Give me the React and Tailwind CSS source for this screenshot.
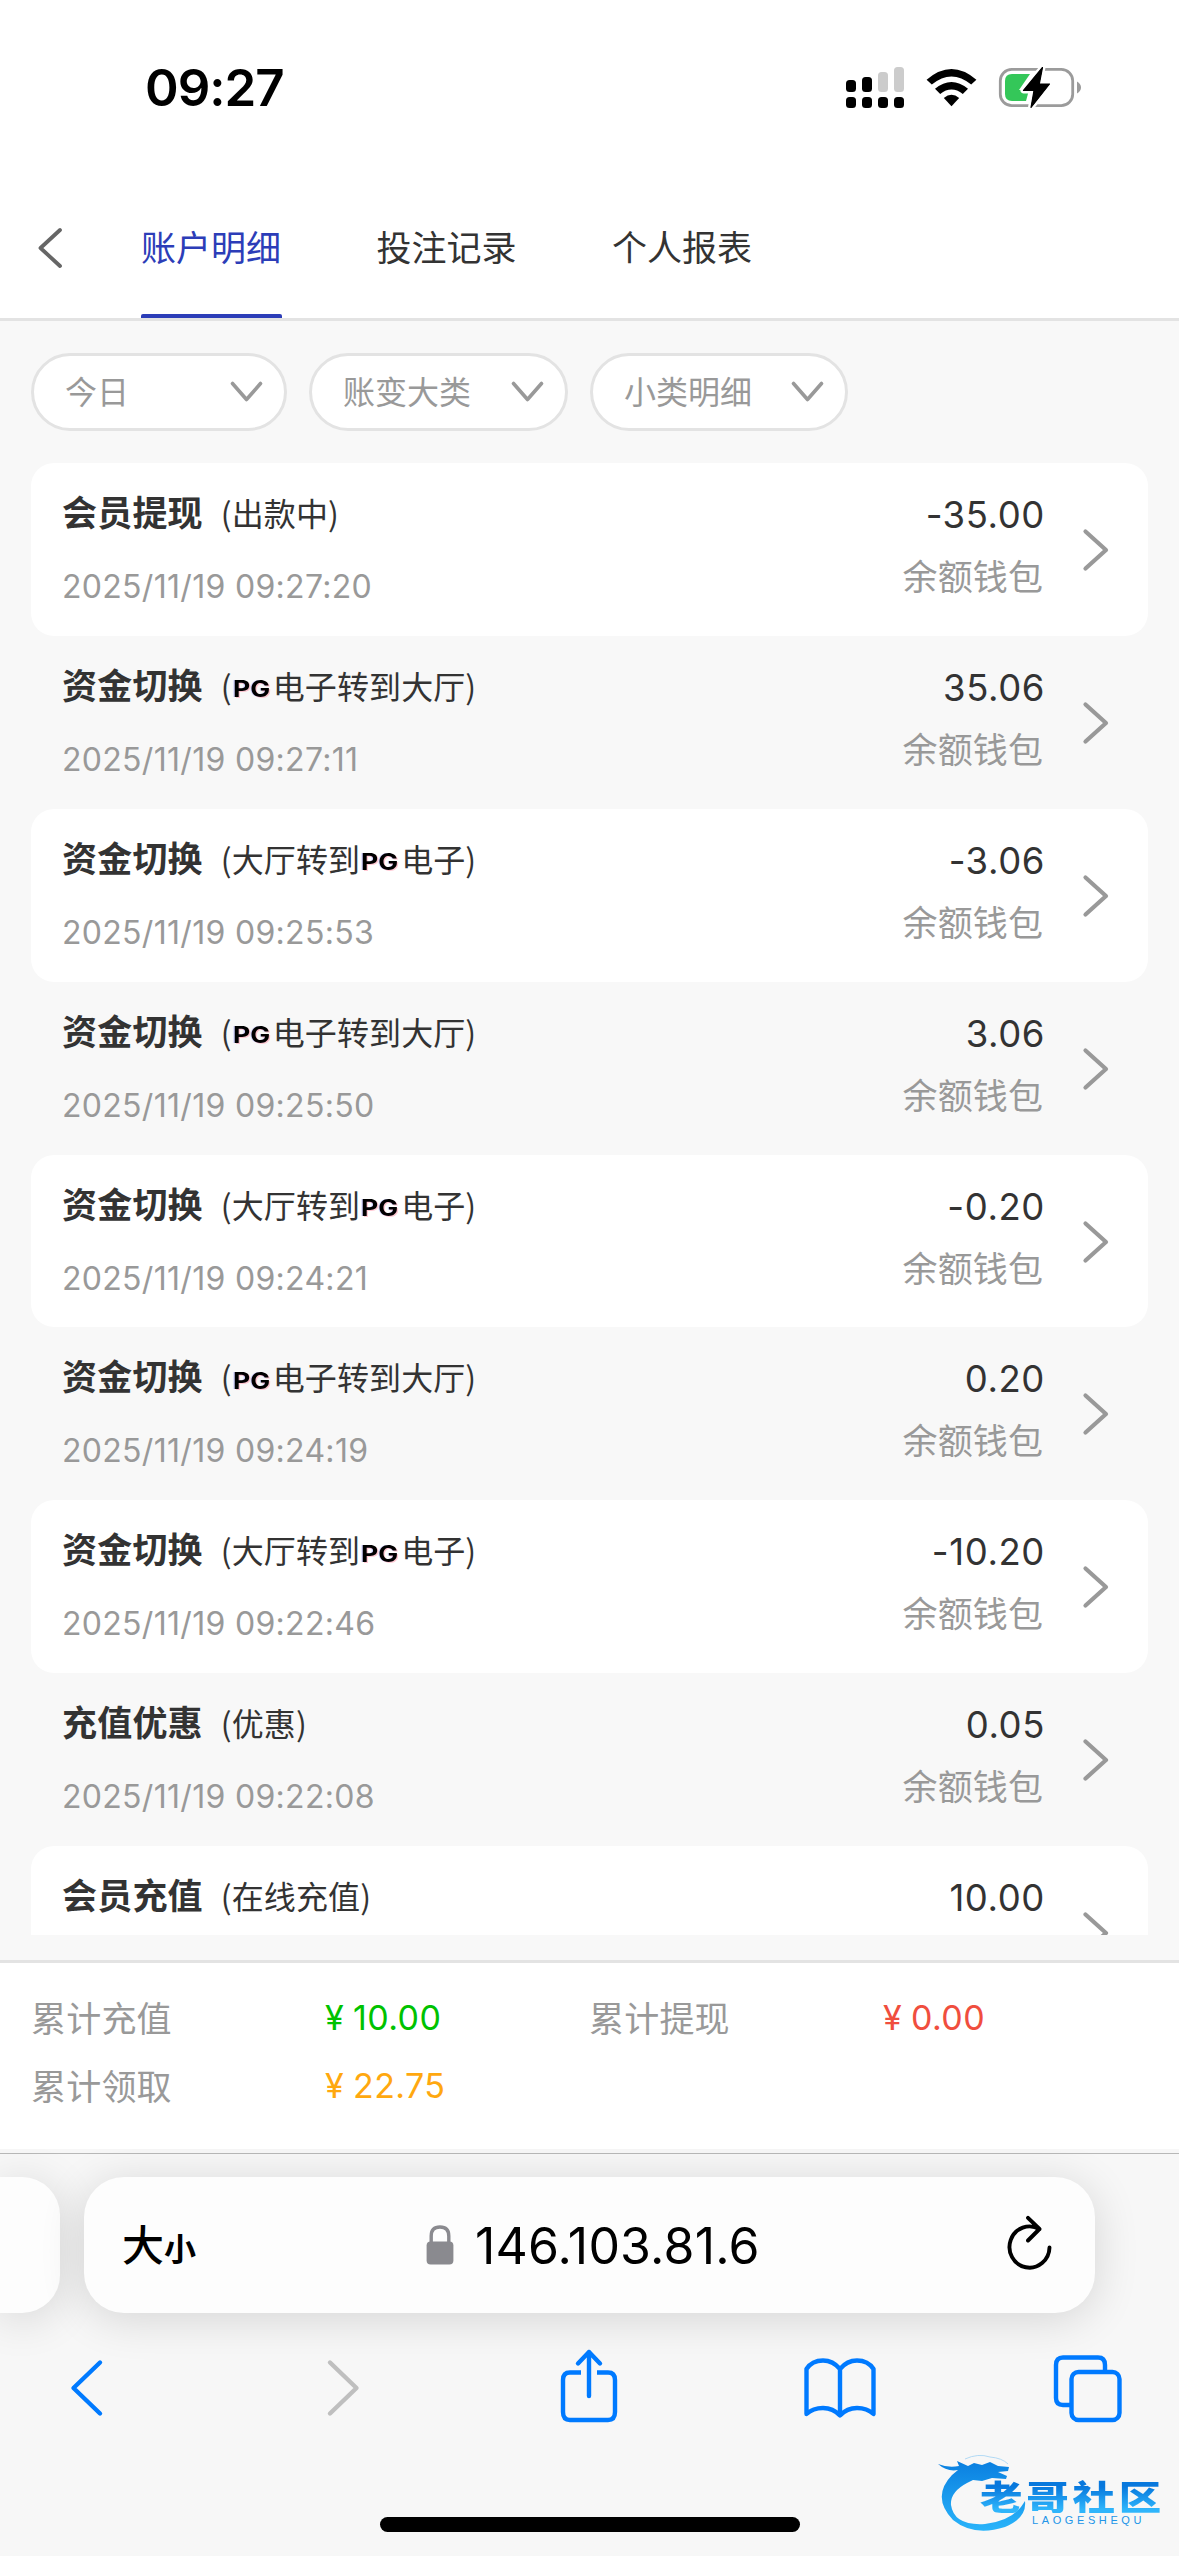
import React from "react";

const CJK = "font-['Noto_Sans_CJK_SC',sans-serif]";
const LATIN = "font-['Inter','Noto_Sans_CJK_SC',sans-serif]";

const PG = () => (
  <span className="-mt-[3px] w-[41px] shrink-0 pl-[1px] text-left">
    <span className="inline-block origin-left scale-x-[1.18] font-['Inter',sans-serif] text-[22.5px] font-bold leading-[32px] text-black [text-shadow:1px_1px_0_#ff5a7a55,-1px_0_0_#5a5aff44]">PG</span>
  </span>
);

const records = [
  { title: "会员提现", note: ["出款中"], time: "2025/11/19 09:27:20", amount: "-35.00" },
  { title: "资金切换", note: ["", "电子转到大厅"], time: "2025/11/19 09:27:11", amount: "35.06" },
  { title: "资金切换", note: ["大厅转到", "电子"], time: "2025/11/19 09:25:53", amount: "-3.06" },
  { title: "资金切换", note: ["", "电子转到大厅"], time: "2025/11/19 09:25:50", amount: "3.06" },
  { title: "资金切换", note: ["大厅转到", "电子"], time: "2025/11/19 09:24:21", amount: "-0.20" },
  { title: "资金切换", note: ["", "电子转到大厅"], time: "2025/11/19 09:24:19", amount: "0.20" },
  { title: "资金切换", note: ["大厅转到", "电子"], time: "2025/11/19 09:22:46", amount: "-10.20" },
  { title: "充值优惠", note: ["优惠"], time: "2025/11/19 09:22:08", amount: "0.05" },
  { title: "会员充值", note: ["在线充值"], time: "", amount: "10.00" },
];

function StatusBar() {
  return (
    <div className="flex h-[176px] items-start justify-between pl-[145px] pr-[97px] pt-[63px]">
      <div className="font-['Inter',sans-serif] text-[51px] font-semibold leading-[50px] tracking-[-1px] text-black">09:27</div>
      <svg width="236" height="42" viewBox="846 67 236 42" className="mt-[4px]">
        <g>
          {[846, 862, 878, 894].map((x) => (
            <rect key={x} x={x} y="97" width="10" height="11" rx="3.5" />
          ))}
          <rect x="846" y="80" width="10" height="12" rx="3.5" />
          <rect x="862" y="77" width="10" height="15" rx="3.5" />
          <rect x="878" y="72" width="10" height="20" rx="3.5" fill="#cccccc" />
          <rect x="894" y="67" width="10" height="25" rx="3.5" fill="#cccccc" />
        </g>
        <path d="M926.6 79.8 Q951.5 58.2 976.4 79.8 L971.2 84.6 Q951.5 68.4 931.8 84.6 Z" />
        <path d="M935 88.8 Q951.5 75.2 968 88.8 L962.8 94 Q951.5 85.2 940.2 94 Z" />
        <path d="M943.8 98 Q951.5 91.4 959.2 98 L951.5 106.2 Z" />
        <rect x="1000.3" y="69.3" width="72.4" height="36.4" rx="11.5" fill="none" stroke="#9b9b9b" strokeWidth="2.8" />
        <path d="M1012 74 H1030 L1019 90 H1029 L1026 101 H1012 Q1005 101 1005 94 V81 Q1005 74 1012 74 Z" fill="#34c759" />
        <path d="M1042.5 67.5 L1023.5 90.5 H1034 L1031 107.5 L1049.5 84 H1039.3 Z" fill="#000" stroke="#fff" strokeWidth="6" strokeLinejoin="round" paintOrder="stroke" />
        <path d="M1042.5 67.5 L1023.5 90.5 H1034 L1031 107.5 L1049.5 84 H1039.3 Z" stroke="#000" strokeWidth="1.2" strokeLinejoin="round" />
        <path d="M1077 81.5 Q1081 84 1081 87.5 Q1081 91 1077 93.5 Z" fill="#9b9b9b" />
      </svg>
    </div>
  );
}

function Tabs() {
  const items = ["账户明细", "投注记录", "个人报表"];
  return (
    <div className="flex h-[145px] border-b-[3px] border-[#e3e3e3] pl-[37px]">
      <svg width="26" height="42" viewBox="0 0 26 42" className="mt-[51px]">
        <path d="M23 3 L3.5 21 L23 39" fill="none" stroke="#666" strokeWidth="3.8" strokeLinecap="round" strokeLinejoin="round" />
      </svg>
      <div className="ml-[78px] flex gap-[94.5px]">
        {items.map((t, i) => (
          <div key={t} className={i === 0 ? "flex h-[142px] w-[141px] flex-col justify-between text-[#2c3db8]" : "h-[142px] w-[141px] text-[#333]"}>
            <div className={`${CJK} mt-[45px] whitespace-nowrap text-[35px] leading-[50px]`}>{t}</div>
            {i === 0 && <div className="h-[4px] rounded-t-[2px] bg-[#2c3db8]" />}
          </div>
        ))}
      </div>
    </div>
  );
}

function Filters() {
  const items = [
    { label: "今日", cls: "w-[256px] mr-[22px]" },
    { label: "账变大类", cls: "w-[259px] mr-[22px]" },
    { label: "小类明细", cls: "w-[258px]" },
  ];
  return (
    <div className="flex pl-[31px] pt-[32px]">
      {items.map((f) => (
        <div key={f.label} className={`${f.cls} flex h-[78px] items-center justify-between rounded-full border-[3px] border-[#e3e3e3] bg-white pl-[31px] pr-[21px]`}>
          <span className={`${CJK} -mt-[4px] text-[32px] leading-[44px] text-[#999]`}>{f.label}</span>
          <svg width="33" height="22" viewBox="0 0 33 22">
            <path d="M2.5 2.5 L16.5 18.5 L30.5 2.5" fill="none" stroke="#999" strokeWidth="3.6" strokeLinecap="round" strokeLinejoin="round" />
          </svg>
        </div>
      ))}
    </div>
  );
}

function Row({ r, white }) {
  return (
    <div className={`${white ? "bg-white" : ""} flex h-[172.9px] shrink-0 justify-between rounded-[23px] pl-[31px] pr-[38px]`}>
      <div>
        <div className="mt-[23px] flex h-[50px] items-center whitespace-nowrap text-[#333]">
          <span className={`${CJK} text-[35px] font-bold leading-[50px] tracking-[0.2px]`}>{r.title}</span>
          <span className={`${CJK} ml-[18px] mt-[2px] flex items-center text-[32px] leading-[50px] tracking-[0.1px]`}>
            <span>({r.note[0]}</span>
            {r.note.length > 1 && <PG />}
            <span>{r.note[1]})</span>
          </span>
        </div>
        {r.time && <div className={`${LATIN} mt-[31px] text-[32px] leading-[40px] tracking-[0.3px] text-[#999]`}>{r.time}</div>}
      </div>
      <div className="flex">
        <div className="text-right">
          <div className={`${LATIN} -mr-[1px] mt-[29px] text-[36.5px] leading-[46px] tracking-[0.6px] text-[#333]`}>{r.amount}</div>
          {r.time && <div className={`${CJK} mr-[1px] mt-[12px] text-[35px] leading-[50px] tracking-[0.1px] text-[#999]`}>余额钱包</div>}
        </div>
        <svg width="28" height="44" viewBox="0 0 28 44" className="ml-[38px] mt-[65px]">
          <path d="M3.5 3.5 L24 22 L3.5 40.5" fill="none" stroke="#999" strokeWidth="4.2" strokeLinecap="round" strokeLinejoin="round" />
        </svg>
      </div>
    </div>
  );
}

function Stat({ label, value, color }) {
  return (
    <div className="flex h-[68px] items-center">
      <span className={`${CJK} -mt-[4px] w-[294px] text-[35px] leading-[50px] tracking-[0.2px] text-[#999]`}>{label}</span>
      <span className={`${LATIN} -mt-[2px] flex text-[34px] leading-[50px] tracking-[0.4px] ${color}`}>
        <span className="w-[28px]">¥</span>
        <span>{value}</span>
      </span>
    </div>
  );
}

function Summary() {
  return (
    <div className="h-[189px] border-t-[3px] border-[#e3e3e3] bg-white pl-[31px] pt-[22px]">
      <div className="grid grid-cols-[558px_558px]">
        <Stat label="累计充值" value="10.00" color="text-[#00c200]" />
        <Stat label="累计提现" value="0.00" color="text-[#f04e3e]" />
        <Stat label="累计领取" value="22.75" color="text-[#ffa80f]" />
      </div>
    </div>
  );
}

function Watermark() {
  return (
    <div className="absolute bottom-[22px] right-[12px] h-[80px] w-[230px]">
      <svg width="230" height="80" viewBox="0 0 230 80" className="absolute -left-[3px] top-0">
        <defs>
          <linearGradient id="dragon" x1="0" y1="0" x2="0" y2="1">
            <stop offset="0" stopColor="#0a7fe0" />
            <stop offset="1" stopColor="#29b4fa" />
          </linearGradient>
        </defs>
        <path fill="url(#dragon)" d="M4 10 Q14 14 25 12 L23 7 L34 12 L40 9 L48 11 L56 8 L64 12 L75 13 L74 17 L64 18 L73 22 L72 25 L58 24 L48 27 L39 26 L33 29 Q16 38 17 51 Q20 72 51 70 Q80 67 91 47 Q93 64 71 73 Q40 83 19 66 Q-3 43 18 21 L24 16 Q13 18 4 10 Z" />
        <path d="M31 5 Q44 -1 56 3 Q68 4 74 10" fill="none" stroke="#9fd2f4" strokeWidth="0.8" />
      </svg>
      <div className={`${CJK} absolute left-[43px] top-[24px] origin-left scale-x-[1.25] whitespace-nowrap bg-gradient-to-b from-[#0878dd] from-25% to-[#2fb5fb] to-90% bg-clip-text text-[34px] font-black leading-[35px] tracking-[3px] text-transparent`}>老哥社区</div>
      <div className="absolute left-[95px] top-[60px] font-['Liberation_Sans',sans-serif] text-[11px] leading-[12px] tracking-[3.6px] text-[#2295e8]">LAOGESHEQU</div>
    </div>
  );
}

function Safari() {
  const blue = "#007aff";
  const line = { fill: "none", stroke: blue, strokeWidth: 4.4, strokeLinecap: "round", strokeLinejoin: "round" };
  return (
    <div className="relative h-[407px] overflow-hidden bg-[#f7f7f7]">
      <div className="h-[5px] border-b border-[#b8b8b8]" />
      <div className="flex pt-[23px]">
        <div className="h-[136px] w-[60px] rounded-r-[38px] bg-[#fdfdfd] shadow-[0_6px_45px_rgba(0,0,0,0.14)]" />
        <div className="ml-[24px] flex h-[136px] w-[1011px] items-center rounded-[40px] bg-[#fdfdfd] pl-[38px] pr-[41px] shadow-[0_6px_45px_rgba(0,0,0,0.14)]">
          <div className={`${CJK} flex w-[304px] items-baseline text-black`}>
            <span className="text-[42px] font-medium leading-[60px]">大</span>
            <span className="text-[32px] font-bold leading-[60px]">小</span>
          </div>
          <svg width="28" height="40" viewBox="0 0 28 40" className="mr-[21px]">
            <path d="M5.2 18 V11 Q5.2 2 14 2 Q22.8 2 22.8 11 V18" fill="none" stroke="#8a8a8f" strokeWidth="3.4" />
            <rect x="0.6" y="16.4" width="26.8" height="23" rx="4" fill="#8a8a8f" />
          </svg>
          <span className="mt-[1px] font-['Inter',sans-serif] text-[50px] leading-[60px] tracking-[0.2px] text-black">146.103.81.6</span>
          <svg width="48" height="58" viewBox="0 0 48 58" className="-mt-[4px] ml-auto" fill="none" stroke="#000" strokeWidth="3.9" strokeLinecap="round" strokeLinejoin="round">
            <path d="M43.5 33.5 A20 20.6 0 1 1 33.5 15.2 M22 3.8 L33.5 15 L22 26.5" />
          </svg>
        </div>
      </div>
      <div className="relative flex pl-[69px] pt-[33px]">
        <svg width="36" height="60" viewBox="0 0 36 60" className="mt-[12px]"><path {...line} d="M31 4.5 L4.5 30 L31 55.5" /></svg>
        <svg width="36" height="60" viewBox="0 0 36 60" className="ml-[220px] mt-[12px]"><path {...line} stroke="#bfbfbf" d="M5 4.5 L31.5 30 L5 55.5" /></svg>
        <svg width="60" height="76" viewBox="0 0 60 76" className="ml-[198px] mt-[2px]">
          <path {...line} strokeLinecap="butt" d="M22 24.5 H11 Q4 24.5 4 32 V64 Q4 72 11 72 H49 Q56 72 56 64 V32 Q56 24.5 49 24.5 H38" />
          <path {...line} d="M30 48 V4 M19 15.5 L30 4 L41 15.5" />
        </svg>
        <svg width="74" height="64" viewBox="0 0 74 64" className="ml-[184px] mt-[10px]">
          <path {...line} d="M37 13 Q30 4.5 20 4.5 Q9 4.5 3.5 13 V58 Q10 52 20 52 Q30 52 37 59.5 Q44 52 54 52 Q64 52 70.5 58 V13 Q65 4.5 54 4.5 Q44 4.5 37 13 V59" />
        </svg>
        <svg width="70" height="70" viewBox="0 0 70 70" className="ml-[175px] mt-[7px]">
          <path {...line} strokeLinecap="butt" d="M18 52 H11 Q4 52 4 45 V12 Q4 4.5 11 4.5 H46 Q53 4.5 53 12 V19" />
          <rect {...line} x="19.5" y="19" width="48" height="48" rx="7" />
        </svg>
      </div>
      <div className="absolute bottom-[24px] left-[380px] h-[15px] w-[420px] rounded-full bg-black" />
      <Watermark />
    </div>
  );
}

export default function App() {
  return (
    <div className="flex h-[2556px] w-[1179px] flex-col overflow-hidden bg-white">
      <StatusBar />
      <Tabs />
      <div className="h-[1639px] bg-[#f8f8f8]">
        <Filters />
        <div className="mx-[31px] mt-[32px] flex h-[1472px] flex-col overflow-hidden">
          {records.map((r, i) => (
            <Row key={i} r={r} white={i % 2 === 0} />
          ))}
        </div>
      </div>
      <Summary />
      <Safari />
    </div>
  );
}
